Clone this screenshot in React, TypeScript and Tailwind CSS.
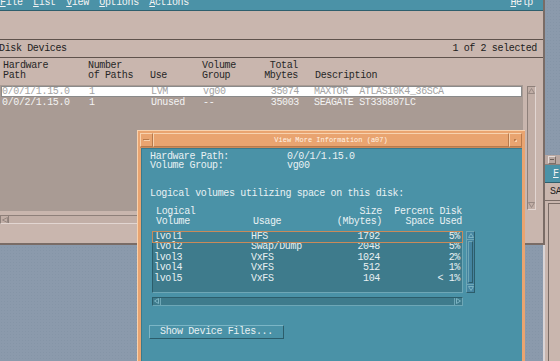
import React from "react";

const MONO =
  "font-['Liberation_Mono','DejaVu_Sans_Mono',monospace] text-[10px] tracking-[-0.36px]";

function Tri({ dir, c, w = 7, h = 6 }: { dir: "up" | "down" | "left" | "right"; c: string; w?: number; h?: number }) {
  let d = "";
  if (dir === "up") d = `M0.5 ${h - 0.5} L${w / 2} 0.5 L${w - 0.5} ${h - 0.5} Z`;
  if (dir === "down") d = `M0.5 0.5 L${w / 2} ${h - 0.5} L${w - 0.5} 0.5 Z`;
  if (dir === "left") d = `M${w - 0.5} 0.5 L0.5 ${h / 2} L${w - 0.5} ${h - 0.5} Z`;
  if (dir === "right") d = `M0.5 0.5 L${w - 0.5} ${h / 2} L0.5 ${h - 0.5} Z`;
  return (
    <svg width={w} height={h} viewBox={`0 0 ${w} ${h}`} className="block">
      <path d={d} fill="none" stroke={c} strokeWidth="1" />
    </svg>
  );
}

function MenuItem({ t }: { t: string }) {
  return (
    <span className="whitespace-pre">
      <span className="underline underline-offset-[1px]">{t[0]}</span>
      {t.slice(1)}
    </span>
  );
}

export default function App() {
  return (
    <div
      className={`relative w-[560px] h-[361px] overflow-hidden bg-[#8b9aac] ${MONO}`}
    >
      {/* desktop texture */}
      <div className="absolute inset-0 bg-[radial-gradient(#7f8fa2_0.7px,transparent_0.8px)] bg-[length:3px_3px] opacity-50" />

      {/* right background window */}
      <div className="absolute left-[543px] top-[155px] w-[30px] h-[220px] bg-[#c9b6ae] border-l-2 border-[#d9d4d6] flex flex-col">
        <div className="h-[10px] shrink-0 bg-[#b9a8a2] flex items-center pl-[3px] border-b border-[#8e807a]">
          <div className="w-[8px] h-[8px] border border-[#e6dcd8] border-r-[#7c6e68] border-b-[#7c6e68] flex items-center justify-center">
            <div className="w-[4px] h-[1px] bg-[#6d605a]" />
          </div>
        </div>
        <div className="h-[18px] shrink-0 bg-[#4b92a7] flex items-center pl-[8px] text-[#f4f4f4] border-b border-[#2e5f6d]">
          <span className="underline underline-offset-[1px]">F</span>
        </div>
        <div className="h-[18px] shrink-0 flex items-center pl-[5px] text-[#1c1c1c] border-b border-[#7a6c66]">SA</div>
        <div className="ml-[3px] mt-[2px] flex-1 border border-[#7a6c66] border-r-0" />
      </div>

      {/* main window */}
      <div className="absolute left-0 top-[-5px] w-[545px] h-[250px] bg-[#c9b6ae] border-r-2 border-b-2 border-[#7a6c66] flex flex-col">
        {/* menubar */}
        <div className="h-[16px] shrink-0 bg-[#4b92a7] border-b border-[#2e5f6d] flex items-center text-[#f4f4f4] pr-[10px] gap-[10.5px] leading-[10px]">
          <MenuItem t="File" />
          <MenuItem t="List" />
          <MenuItem t="View" />
          <MenuItem t="Options" />
          <MenuItem t="Actions" />
          <span className="ml-auto">
            <MenuItem t="Help" />
          </span>
        </div>
        {/* toolbar area */}
        <div className="h-[28px] shrink-0" />
        {/* title row */}
        <div className="h-[18px] shrink-0 border-t border-[#5f524c] flex items-center justify-between pr-[6px] text-[#1c1c1c]">
          <span className="-ml-[1px]">Disk Devices</span>
          <span>1 of 2 selected</span>
        </div>
        {/* header */}
        <div className="h-[28px] shrink-0 border-t border-[#5f524c] pt-[3px] leading-[10px] text-[#262626] flex">
          <div className="w-[88px] pl-[3px] whitespace-pre">{"Hardware\nPath"}</div>
          <div className="w-[62px] whitespace-pre">{"Number\nof Paths"}</div>
          <div className="w-[52px] whitespace-pre">{"\nUse"}</div>
          <div className="w-[61px] whitespace-pre">{"Volume\nGroup"}</div>
          <div className="w-[35px] text-right whitespace-pre">{"Total\nMbytes"}</div>
          <div className="ml-[17px] whitespace-pre">{"\nDescription"}</div>
        </div>
        {/* list area */}
        <div className="h-[126px] shrink-0 flex">
          <div className="w-[523px] bg-[#a99b94] pt-[1px] flex flex-col">
            <div className="ml-[1px] w-[521px] h-[11px] bg-white border border-[#8a8a8a] flex items-center text-[#a3a3a3] leading-[10px]">
              <div className="w-[87px] whitespace-pre">0/0/1/1.15.0</div>
              <div className="w-[62px]">1</div>
              <div className="w-[52px]">LVM</div>
              <div className="w-[61px]">vg00</div>
              <div className="w-[35px] text-right">35074</div>
              <div className="ml-[15px] whitespace-pre">MAXTOR  ATLAS10K4_36SCA</div>
            </div>
            <div className="ml-[1px] h-[11px] flex items-center text-[#f3f3f3] leading-[10px]">
              <div className="w-[88px] pl-[1px] whitespace-pre">0/0/2/1.15.0</div>
              <div className="w-[62px]">1</div>
              <div className="w-[52px]">Unused</div>
              <div className="w-[61px]">--</div>
              <div className="w-[35px] text-right">35003</div>
              <div className="ml-[15px] whitespace-pre">SEAGATE ST336807LC</div>
            </div>
          </div>
          <div className="ml-[4px] mt-[1px] mb-[1px] w-[9px] bg-[#c2afa7] border border-[#8e807a] border-r-[#e2d6d2] border-b-[#e2d6d2] flex flex-col justify-between items-center py-[1px]">
            <Tri dir="up" c="#978882" />
            <Tri dir="down" c="#978882" />
          </div>
        </div>
        {/* horizontal scrollbar */}
        <div className="mt-[4px] h-[9px] w-[523px] shrink-0 bg-[#c2afa7] border border-[#8e807a] border-r-[#e2d6d2] border-b-[#e2d6d2] flex items-center">
          <div className="w-[8px] h-full flex items-center justify-center border-r border-[#8e807a]">
            <Tri dir="left" c="#978882" w={6} h={6} />
          </div>
        </div>
        <div className="flex-1" />
      </div>

      {/* dialog */}
      <div className="absolute left-[137px] top-[130px] w-[388px] h-[240px] bg-[#e9a470] border-l-[1px] border-t-[1px] border-[#f8d2ae] border-r-[#b87a4c] flex flex-col pl-[2px] pt-[2px] pr-[3px]">
        {/* title bar */}
        <div className="h-[15px] shrink-0 flex items-stretch border-b border-[#c98a5a]">
          <div className="w-[13px] border border-[#f8d2ae] border-r-[#b87a4c] border-b-[#b87a4c] flex items-center justify-center">
            <div className="w-[7px] h-[2px] border border-[#b87a4c] border-b-[#f8d2ae] border-r-[#f8d2ae]" />
          </div>
          <div className="flex-1 border border-[#f8d2ae] border-r-[#b87a4c] border-b-[#b87a4c] flex items-center justify-center text-[7px] tracking-[0px] text-[#fff3e6]">
            View More Information (a07)
          </div>
          <div className="w-[13px] border border-[#f8d2ae] border-r-[#b87a4c] border-b-[#b87a4c] flex items-center justify-center">
            <div className="w-[3px] h-[3px] border border-[#b87a4c] border-b-[#f8d2ae] border-r-[#f8d2ae]" />
          </div>
        </div>
        {/* body */}
        <div className="flex-1 ml-[1px] bg-[#4a92a7] border-l border-t border-[#3a7a8c] text-[#e9f1f3] pl-[8px] pt-[3px] flex flex-col">
          <div className="leading-[9px] flex">
            <div className="w-[137px] whitespace-pre">{"Hardware Path:\nVolume Group:"}</div>
            <div className="whitespace-pre">{"0/0/1/1.15.0\nvg00"}</div>
          </div>
          <div className="mt-[19px] leading-[9px]">Logical volumes utilizing space on this disk:</div>
          <div className="mt-[8.5px] leading-[10px] flex pl-[6px]">
            <div className="w-[97px] whitespace-pre">{"Logical\nVolume"}</div>
            <div className="w-[80px] whitespace-pre">{"\nUsage"}</div>
            <div className="w-[49px] text-right whitespace-pre">{"Size\n(Mbytes)"}</div>
            <div className="w-[80px] text-right whitespace-pre">{"Percent Disk\nSpace Used"}</div>
          </div>
          <div className="mt-[4px] flex ml-[2px]">
            <div className="w-[311px] h-[62px] bg-[#3e7b8c] border border-[#2c5d6b] border-r-[#6ea7b6] border-b-[#6ea7b6] leading-[10.6px]">
              {[
                ["lvol1", "HFS", "1792", "5%"],
                ["lvol2", "Swap/Dump", "2048", "5%"],
                ["lvol3", "VxFS", "1024", "2%"],
                ["lvol4", "VxFS", "512", "1%"],
                ["lvol5", "VxFS", "104", "< 1%"],
              ].map((r, i) => (
                <div
                  key={i}
                  className={`flex h-[10.6px] items-center pl-[1px] ${i === 0 ? "outline outline-1 outline-[#c98a5a] bg-[#417f90]" : ""}`}
                >
                  <div className="w-[97px]">{r[0]}</div>
                  <div className="w-[80px]">{r[1]}</div>
                  <div className="w-[49px] text-right">{r[2]}</div>
                  <div className="w-[80px] text-right whitespace-pre">{r[3]}</div>
                </div>
              ))}
            </div>
            <div className="ml-[3px] w-[9px] h-[62px] bg-[#4584a0] border border-[#6ea7b6] border-r-[#2c5d6b] border-b-[#2c5d6b] flex flex-col justify-between">
              <div className="h-[8px] flex items-center justify-center border-b border-[#6ea7b6]">
                <Tri dir="up" c="#7db4c3" w={6} h={5} />
              </div>
              <div className="mx-[1px] flex-1 border border-[#6ea7b6] border-r-[#2c5d6b] border-b-[#2c5d6b] my-[1px]" />
              <div className="h-[8px] flex items-center justify-center border-t border-[#6ea7b6]">
                <Tri dir="down" c="#7db4c3" w={6} h={5} />
              </div>
            </div>
          </div>
          <div className="mt-[4px] ml-[2px] w-[311px] h-[9px] bg-[#3e7b8c] border border-[#2c5d6b] border-r-[#6ea7b6] border-b-[#6ea7b6] flex items-center justify-between">
            <div className="w-[8px] h-full flex items-center justify-center border-r border-[#6ea7b6]">
              <Tri dir="left" c="#7db4c3" w={5} h={6} />
            </div>
            <div className="w-[8px] h-full flex items-center justify-center border-l border-[#6ea7b6]">
              <Tri dir="right" c="#7db4c3" w={5} h={6} />
            </div>
          </div>
          <div className="mt-[19px] -ml-[1px] w-[135px] h-[14px] bg-[#4a92a7] border border-[#7cb6c6] border-r-[#2c5d6b] border-b-[#2c5d6b] flex items-center pl-[10px] whitespace-pre">
            Show Device Files...
          </div>
        </div>
      </div>
    </div>
  );
}
